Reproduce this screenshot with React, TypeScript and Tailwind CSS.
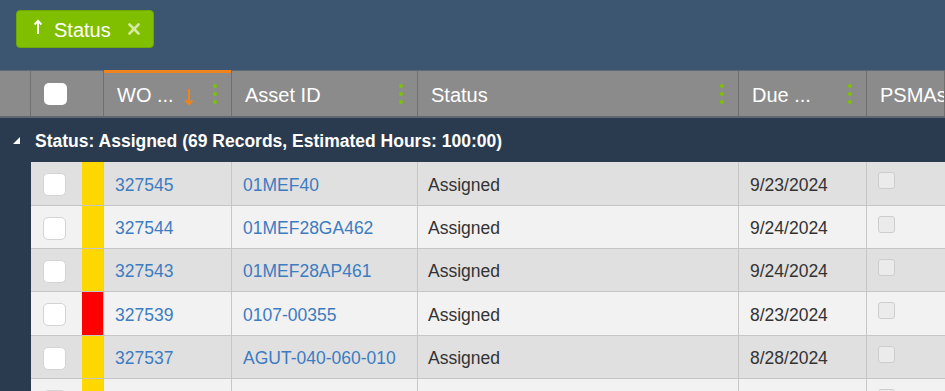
import React from "react";
import { X } from "lucide-react";

type Row = { wo: string; asset: string; status: string; due: string; flag: "yellow" | "red"; h: string };

const rows: Row[] = [
  { wo: "327545", asset: "01MEF40", status: "Assigned", due: "9/23/2024", flag: "yellow", h: "h-[44px]" },
  { wo: "327544", asset: "01MEF28GA462", status: "Assigned", due: "9/24/2024", flag: "yellow", h: "h-[43px]" },
  { wo: "327543", asset: "01MEF28AP461", status: "Assigned", due: "9/24/2024", flag: "yellow", h: "h-[43px]" },
  { wo: "327539", asset: "0107-00355", status: "Assigned", due: "8/23/2024", flag: "red", h: "h-[44px]" },
  { wo: "327537", asset: "AGUT-040-060-010", status: "Assigned", due: "8/28/2024", flag: "yellow", h: "h-[43px]" },
  { wo: "", asset: "", status: "", due: "", flag: "yellow", h: "h-[43px]" },
];

/* three green dots = column menu handle */
function ColMenu() {
  return (
    <div className="flex flex-col gap-1 mr-[14px]">
      <span className="w-1 h-1 rounded-full bg-[#7ac300]" />
      <span className="w-1 h-1 rounded-full bg-[#7ac300]" />
      <span className="w-1 h-1 rounded-full bg-[#7ac300]" />
    </div>
  );
}

function HeaderCell({ label, menu = true, children }: { label: string; menu?: boolean; children?: React.ReactNode }) {
  return (
    <div className="flex flex-1 items-center justify-between border-r border-[#6f6f6f] pl-[13px] overflow-hidden whitespace-nowrap">
      <div className="flex items-center pt-[3px]">
        <span>{label}</span>
        {children}
      </div>
      {menu && <ColMenu />}
    </div>
  );
}

export default function App() {
  return (
    <div className="w-[945px] h-[391px] overflow-hidden bg-[#2a3b4f] font-['Liberation_Sans',Arial,sans-serif]">
      {/* Group-by bar */}
      <div className="h-[70px] bg-[#3c5671] pl-4 pt-[10px]">
        <div className="inline-flex items-center h-[38px] w-[138px] rounded-[4px] bg-[#80bf00] border border-[#6fa800] pl-[16px] text-white text-[20px]">
          <svg width="10" height="16" viewBox="0 0 10 16" className="mb-[5px]">
            <path d="M5 15V2M1.5 5.5L5 2l3.5 3.5" fill="none" stroke="white" strokeWidth="2" />
          </svg>
          <span className="ml-[11px] pt-[1px]">Status</span>
          <X className="ml-[14px] w-[18px] h-[18px] text-[#d4eaa0]" strokeWidth={3.5} />
        </div>
      </div>

      {/* Column header */}
      <div className="grid grid-cols-[31px_73px_128px_186px_321px_128px_1fr] h-[48px] bg-[#8b8b8b] text-white text-[20px] border-t border-[#5f6b78] border-b-2 border-b-[#5d6873]">
        <div className="border-r border-[#6f6f6f]" />
        <div className="flex items-center border-r border-[#6f6f6f] pl-[13px]">
          <div className="w-[23px] h-[22px] rounded-[5px] bg-white" />
        </div>
        <div className="relative flex">
          <div className="absolute top-[-1px] left-0 right-[1px] h-[3px] bg-[#f0841c]" />
          <HeaderCell label="WO ...">
            <svg width="10" height="18" viewBox="0 0 10 18" className="ml-[10px] mt-[3px]">
              <path d="M5 1v15M1.5 12.5L5 16l3.5-3.5" fill="none" stroke="#f0841c" strokeWidth="2" />
            </svg>
          </HeaderCell>
        </div>
        <HeaderCell label="Asset ID" />
        <HeaderCell label="Status" />
        <HeaderCell label="Due ..." />
        <HeaderCell label="PSMAs" menu={false} />
      </div>

      {/* Group row */}
      <div className="flex items-center h-[44px] pt-[3px] text-white text-[17.5px] font-bold">
        <svg width="9" height="9" viewBox="0 0 9 9" className="ml-[12px] mr-[14px] mt-[-3px]">
          <path d="M8 1v7H1z" fill="white" />
        </svg>
        <span>Status: Assigned (69 Records, Estimated Hours: 100:00)</span>
      </div>

      {/* Data rows */}
      <div className="pl-[31px]">
        {rows.map((r, i) => (
          <div
            key={i}
            className={`grid grid-cols-[51px_22px_128px_186px_321px_128px_1fr] ${r.h} border-b border-[#c6c6c6] text-[17.5px] ${
              i % 2 === 0 ? "bg-[#e0e0e0]" : "bg-[#f2f2f2]"
            }`}
          >
            <div className="flex items-center pl-[12px] pt-[2px]">
              <div className="w-[23px] h-[23px] rounded-[5px] bg-white border border-[#d4d4d4]" />
            </div>
            <div className={`border-r border-[#c6c6c6] ${r.flag === "red" ? "bg-[#ff0000]" : "bg-[#ffd800]"}`} />
            <div className="flex items-center border-r border-[#c6c6c6] pl-[11px] pt-[3px] text-[#3d7cc0]">{r.wo}</div>
            <div className="flex items-center border-r border-[#c6c6c6] pl-[11px] pt-[3px] text-[#3d7cc0]">{r.asset}</div>
            <div className="flex items-center border-r border-[#c6c6c6] pl-[10px] pt-[3px] text-[#333333]">{r.status}</div>
            <div className="flex items-center border-r border-[#c6c6c6] pl-[11px] pt-[3px] text-[#333333]">{r.due}</div>
            <div className="pl-[11px] pt-[10px]">
              <div className="w-[17px] h-[17px] rounded-[3px] bg-[#ebebeb] border border-[#cdcdcd]" />
            </div>
          </div>
        ))}
      </div>
    </div>
  );
}
